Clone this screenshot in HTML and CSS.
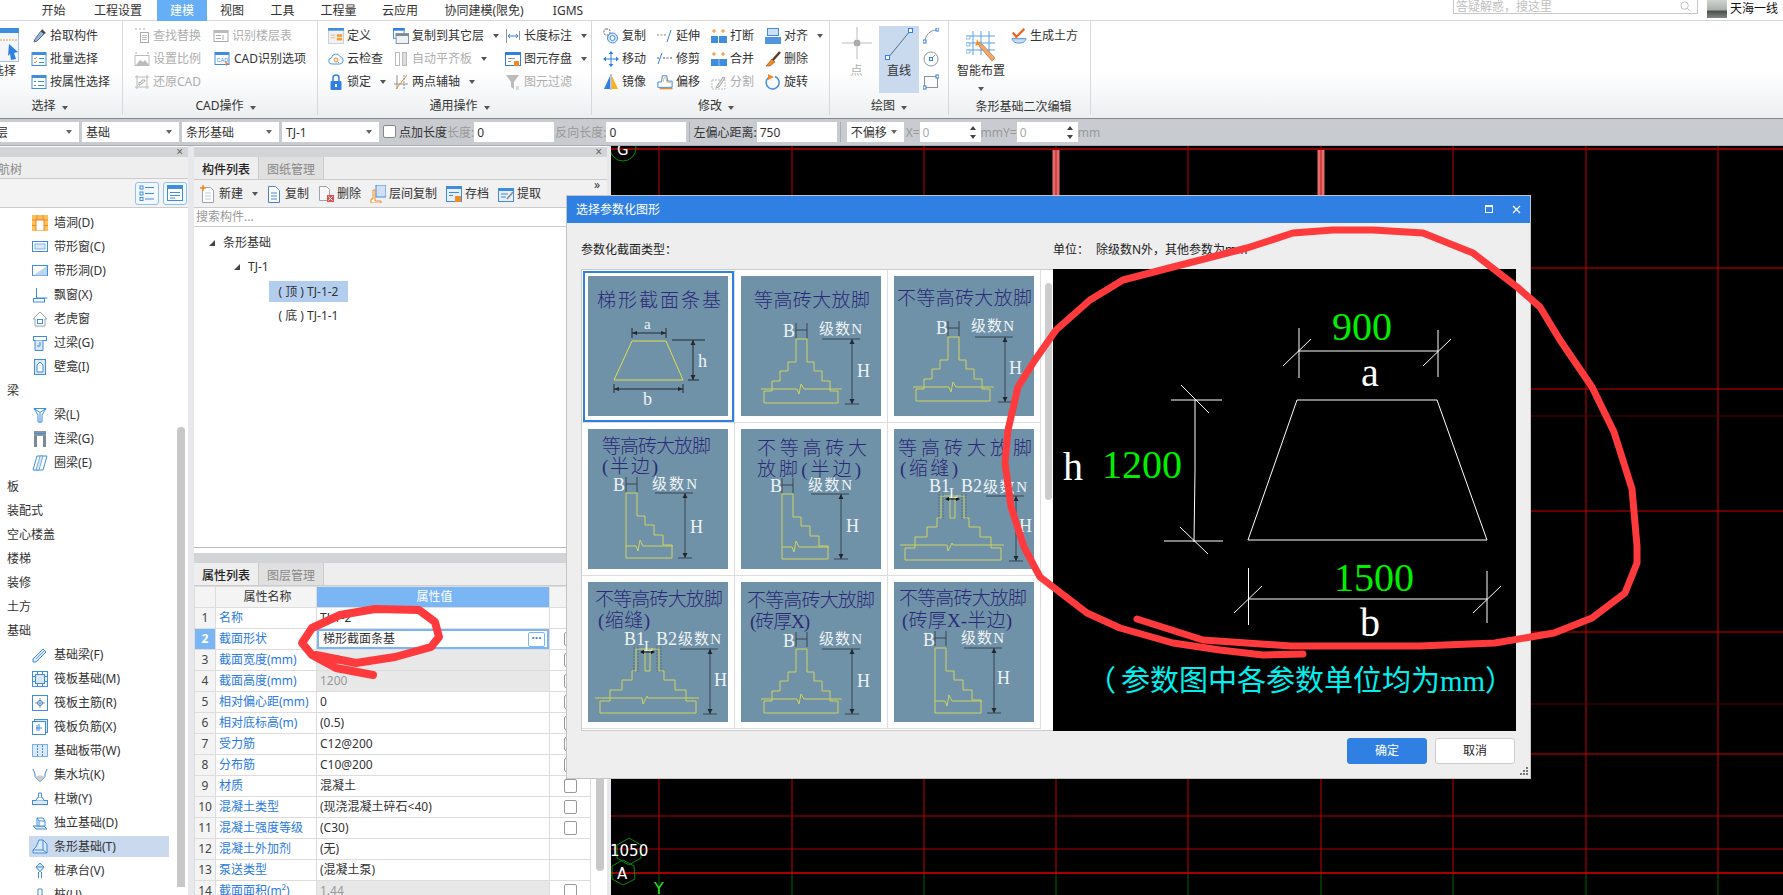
FILE: index.html
```html
<html>
<head>
<meta charset="utf-8">
<title>选择参数化图形</title>
<link rel="stylesheet" href="styles.css">
</head>
<body>
<svg class="defs">
  <defs>
    <symbol id="i-pick" viewBox="0 0 16 16"><path d="M10 3l3 3-7 7-3 1 1-3z" fill="#8db8e4" stroke="#5d6b78"/><path d="M11 1l4 4-2 1-3-3z" fill="#444"/></symbol>
    <symbol id="i-batch" viewBox="0 0 16 16"><rect x="1" y="1.500" width="14" height="13" fill="#fff" stroke="#3f8ddf"/><rect x="1" y="1" width="14" height="3" fill="#3f8ddf"/><path d="M3 7l1 1 2-2M3 11l1 1 2-2" fill="none" stroke="#f08a24"/><path d="M8 7.500h5M8 11.500h5" stroke="#3f8ddf"/></symbol>
    <symbol id="i-attr" viewBox="0 0 16 16"><rect x="1" y="1.500" width="14" height="13" fill="#fff" stroke="#3f8ddf"/><rect x="1" y="1" width="14" height="3" fill="#3f8ddf"/><path d="M3 7.500h2M7 7.500h6M3 11.500h2M7 11.500h6" stroke="#3f8ddf"/></symbol>
    <symbol id="i-find" viewBox="0 0 16 16"><path d="M1 1h2M5 1h2M9 1h2" stroke="#aaa"/><rect x="6.500" y="4.500" width="8" height="10" fill="#fff" stroke="#aaa"/><path d="M8 7.500h5M8 9.500h5M8 11.500h5" stroke="#bbb"/></symbol>
    <symbol id="i-floor" viewBox="0 0 16 16"><rect x="1" y="2.500" width="14" height="11" fill="#fff" stroke="#aaa"/><rect x="1" y="2" width="14" height="3" fill="#bbb"/><path d="M3 7.500h5M3 10.500h5M10 7v5" stroke="#aaa"/></symbol>
    <symbol id="i-scale" viewBox="0 0 16 16"><path d="M1 2h2M13 2h2" stroke="#aaa"/><rect x="1" y="4.500" width="14" height="10" fill="#fff" stroke="#bbb"/><path d="M2 14l4-5 3 2 2-2 4 5z" fill="#bbb"/></symbol>
    <symbol id="i-cad" viewBox="0 0 16 16"><rect x="1" y="1.500" width="14" height="12" fill="#fff" stroke="#3f8ddf"/><rect x="1" y="1" width="14" height="3" fill="#3f8ddf"/><text class="ico-text" x="2.500" y="11">CAD</text><path d="M11 10l4 3-2 .6-.7 2z" fill="#f07b3f"/></symbol>
    <symbol id="i-undo" viewBox="0 0 16 16"><path d="M3 1v14M1 3h14M13 1v14M1 13h14" stroke="#bbb" fill="none"/><path d="M6 11l5-4v-1h-3l-2 3-1-1v3z" fill="none" stroke="#aaa"/></symbol>
    <symbol id="i-def" viewBox="0 0 18 18"><rect x=".5" y=".5" width="17" height="17" fill="#eef2f6" stroke="#c6ccd2"/><rect y="0" width="18" height="3" fill="#3f8ddf"/><path d="M3 8h5M3 11h5" stroke="#f0b060"/><rect x="10" y="7" width="6" height="3" fill="#f0a030"/><rect x="10" y="11" width="6" height="3" fill="#f0a030"/></symbol>
    <symbol id="i-cloud" viewBox="0 0 16 16"><path d="M4 13a3 3 0 0 1-.5-6A4.500 4.500 0 0 1 12 5.500 3.800 3.800 0 0 1 12 13z" fill="#fff" stroke="#4a96e2"/><circle cx="8" cy="9" r="2" fill="none" stroke="#f08a24"/><path d="M9.500 10.500l1.500 1.500" stroke="#f08a24"/></symbol>
    <symbol id="i-lock" viewBox="0 0 16 16"><path d="M5 7V4a3 3 0 0 1 6 0v3" fill="none" stroke="#2f80e2" stroke-width="1.500"/><rect x="2.500" y="7" width="11" height="9" rx="1" fill="#2f80e2"/><rect x="7" y="10" width="2" height="3" fill="#fff"/></symbol>
    <symbol id="i-copyfloor" viewBox="0 0 18 18"><rect x=".5" y=".5" width="12" height="11" fill="#fff" stroke="#2f80e2"/><rect width="13" height="3" fill="#2f80e2"/><rect x="3.500" y="6.500" width="14" height="11" fill="#eef2f6" stroke="#7c8a96"/><rect x="3" y="6" width="15" height="3" fill="#7c8a96"/></symbol>
    <symbol id="i-slab" viewBox="0 0 16 16"><rect x="2.500" y="1.500" width="4" height="13" fill="#fff" stroke="#bbb"/><rect x="9.500" y="1.500" width="4" height="13" fill="#ddd" stroke="#bbb"/></symbol>
    <symbol id="i-axis" viewBox="0 0 16 16"><path d="M4 1v14M1 10h14" stroke="#8a949c"/><path d="M14 1L3 15" stroke="#f08a24"/><path d="M11 1v14" stroke="#8a949c" stroke-dasharray="2 1"/></symbol>
    <symbol id="i-len" viewBox="0 0 16 16"><path d="M1.500 1v14M14.500 3v9" stroke="#8a949c"/><path d="M3 8h10M5 6L3 8l2 2M11 6l2 2-2 2" fill="none" stroke="#2f80e2"/></symbol>
    <symbol id="i-save" viewBox="0 0 16 16"><rect x=".5" y="1.500" width="15" height="13" fill="#fff" stroke="#2f80e2"/><rect y="1" width="16" height="3" fill="#2f80e2"/><path d="M3 7.500h7M3 10.500h3" stroke="#8a949c"/><rect x="9" y="10" width="5" height="5" fill="#f08a24"/></symbol>
    <symbol id="i-filter" viewBox="0 0 16 16"><path d="M1 1h13L9 8v7l-3-2V8z" fill="#bcbcbc"/><path d="M11 13h3M11 15h3" stroke="#bbb"/></symbol>
    <symbol id="i-copy" viewBox="0 0 16 16"><rect x="1" y="1" width="6" height="6" rx="2" fill="none" stroke="#666" stroke-dasharray="2 1"/><circle cx="9.500" cy="10" r="5" fill="#d8e8f8" stroke="#3f8ddf"/><circle cx="9.500" cy="10" r="2.500" fill="#fff" stroke="#3f8ddf"/></symbol>
    <symbol id="i-extend" viewBox="0 0 16 16"><path d="M0 7h10" stroke="#888" stroke-dasharray="2 1.500"/><path d="M10 14l4-12" stroke="#2f80e2"/></symbol>
    <symbol id="i-trim" viewBox="0 0 16 16"><path d="M1 13l4-11" stroke="#2f80e2"/><path d="M0 7h3M6 7h9" stroke="#555" stroke-dasharray="2 1.500"/></symbol>
    <symbol id="i-move" viewBox="0 0 16 16"><path d="M8 2v12M2 8h12" stroke="#2f80e2"/><path d="M8 0l2.500 3h-5zM8 16l2.500-3h-5zM0 8l3-2.500v5zM16 8l-3-2.500v5z" fill="#2f80e2"/></symbol>
    <symbol id="i-mirror" viewBox="0 0 16 16"><path d="M7 2v13H1z" fill="#2f80e2"/><path d="M9 2v13h6z" fill="#fbb020"/><path d="M8 0v16" stroke="#888"/></symbol>
    <symbol id="i-offset" viewBox="0 0 18 18"><path d="M1 15V9h4l1-7h5l1 6h5v7z" fill="#fff" stroke="#2f80e2"/><path d="M3 16.500h14.500" stroke="#f08a24" stroke-width="1.500"/><path d="M7 9l1-5h2l1 5 5 1" fill="none" stroke="#f0b060"/></symbol>
    <symbol id="i-break" viewBox="0 0 16 16"><path d="M3 1v4M1 3h4M12 1v4M10 3h4" stroke="#f08a24"/><rect x="0" y="8" width="7" height="7" fill="#3f8ddf"/><rect x="8" y="8" width="8" height="7" fill="#3f8ddf"/></symbol>
    <symbol id="i-merge" viewBox="0 0 16 16"><path d="M3 1v4M1 3h4M12 1v4M10 3h4" stroke="#f08a24"/><rect x="0" y="8" width="16" height="7" fill="#3f8ddf"/><path d="M8 8v7" stroke="#9cc4ee"/></symbol>
    <symbol id="i-split" viewBox="0 0 16 16"><rect x="1" y="6" width="13" height="9" fill="#fff" stroke="#bbb" stroke-dasharray="2 1"/><path d="M6 12l6-9 2 1-6 9-3 1z" fill="#ddd" stroke="#aaa"/></symbol>
    <symbol id="i-alignb" viewBox="0 0 16 16"><rect x="2.500" y=".5" width="11" height="7" fill="#cfe0f5" stroke="#3f8ddf"/><rect y="9" width="16" height="7" fill="#4f95e0"/></symbol>
    <symbol id="i-del" viewBox="0 0 16 16"><path d="M15 1L7 10" stroke="#5a3a20" stroke-width="2.500"/><path d="M7 8l3 3-5 4H1z" fill="#f08a24" stroke="#5a3a20" stroke-width=".5"/></symbol>
    <symbol id="i-rotate" viewBox="0 0 16 16"><path d="M10 2.500A6.500 6.500 0 1 1 3 4" fill="none" stroke="#3f8ddf" stroke-width="1.500"/><path d="M3 0l6 3-6 3z" fill="#f08a24"/></symbol>
    <symbol id="i-point" viewBox="0 0 30 32"><path d="M15 0v12M15 20v12M0 16h11M19 16h11" stroke="#bbb"/><circle cx="15" cy="16" r="3.500" fill="#aaa"/></symbol>
    <symbol id="i-line" viewBox="0 0 28 34"><path d="M3 31L25 4" stroke="#56708c"/><rect x=".5" y="28.500" width="4" height="4" fill="#fff" stroke="#2f80e2"/><rect x="23.500" y="1.500" width="4" height="4" fill="#fff" stroke="#2f80e2"/></symbol>
    <symbol id="i-arc" viewBox="0 0 16 16"><path d="M2 14C2 7 7 2 14 2" fill="none" stroke="#8a949c"/><rect x="0" y="12" width="3" height="3" fill="#fff" stroke="#2f80e2"/><rect x="13" y="0" width="3" height="3" fill="#fff" stroke="#2f80e2"/></symbol>
    <symbol id="i-circle" viewBox="0 0 16 16"><circle cx="8" cy="8" r="7" fill="none" stroke="#8a949c"/><path d="M8 8l4-4" stroke="#8a949c"/><rect x="6.500" y="6.500" width="3" height="3" fill="#fff" stroke="#2f80e2"/></symbol>
    <symbol id="i-rect" viewBox="0 0 16 16"><rect x="1.500" y="2.500" width="13" height="11" fill="none" stroke="#8a949c"/><rect x="0" y="12" width="3" height="3" fill="#fff" stroke="#2f80e2"/><rect x="13" y="1" width="3" height="3" fill="#fff" stroke="#2f80e2"/></symbol>
    <symbol id="i-smart" viewBox="0 0 30 34"><path d="M7 2v24M15 2v24M23 2v24M1 7h28M1 14h28M1 21h28" stroke="#5aa0e8"/><path d="M0 7h4v3H0zM0 14h4v3H0zM0 21h4v3H0z" fill="#fff" stroke="#5aa0e8" stroke-width=".7"/><path d="M13 17l3 -2 13 14-3 3z" fill="#f0a868" stroke="#a8683c" stroke-width=".6"/><path d="M11 10l1.500 3 3-.5-2 2.500 1 3-2.500-2-3 1 1.500-3z" fill="#f08a24"/></symbol>
    <symbol id="i-earth" viewBox="0 0 18 18"><path d="M2 5l4 5 9-9" fill="none" stroke="#f0641e" stroke-width="2.500"/><path d="M1 12h16c-1 3-3 5-8 5s-7-2-8-5z" fill="#c9dcf0" stroke="#3f8ddf"/></symbol>
    <symbol id="i-new" viewBox="0 0 16 18"><path d="M2.500 2.500h8l3 3v12h-11z" fill="#fff" stroke="#98a4ae"/><path d="M5 8h6M5 11h6M5 14h6" stroke="#c0c8d0"/><path d="M3 0v6M0 3h6" stroke="#f08a24" stroke-width="1.500"/></symbol>
    <symbol id="i-doc" viewBox="0 0 14 18"><path d="M1.500 1.500h7l4 4v12h-11z" fill="#fff" stroke="#4a86c8"/><path d="M4 8h6M4 11h6M4 14h6" stroke="#4a86c8"/></symbol>
    <symbol id="i-docdel" viewBox="0 0 16 18"><path d="M1.500 1.500h7l3 3v11h-10z" fill="#f8f8f8" stroke="#98a4ae"/><rect x="9" y="10" width="7" height="7" fill="#e05050"/><path d="M10.500 11.500l4 4M14.500 11.500l-4 4" stroke="#fff"/></symbol>
    <symbol id="i-flcopy" viewBox="0 0 16 18"><rect x="6" y="0" width="10" height="12" fill="#cfe0f5" stroke="#3f8ddf"/><path d="M5 5H3v9h-2v4h10v-2H5z" fill="#fff" stroke="#f08a24"/></symbol>
    <symbol id="i-archive" viewBox="0 0 16 18"><rect x=".5" y="1.500" width="15" height="15" fill="#e8eff7" stroke="#3f8ddf"/><rect y="1" width="16" height="3" fill="#3f8ddf"/><path d="M3 7.500h10M3 10.500h4" stroke="#3f8ddf"/><rect x="9" y="11" width="6" height="6" fill="#f08a24"/></symbol>
    <symbol id="i-extract" viewBox="0 0 16 18"><rect x=".5" y="3.500" width="15" height="13" fill="#e8eff7" stroke="#3f8ddf"/><rect y="3" width="16" height="3" fill="#3f8ddf"/><path d="M3 9h7M3 12h5" stroke="#3f8ddf"/><path d="M9 14l6-7" stroke="#888" stroke-width="1.500"/></symbol>
    <symbol id="n-wall" viewBox="0 0 16 16"><rect width="16" height="16" fill="#fbc25c"/><path d="M0 5h16M5 0v5M11 0v5M0 10.500h4M12 10.500h4" stroke="#f08a24"/><rect x="4" y="5" width="8" height="11" fill="#fff" stroke="#f08a24"/></symbol>
    <symbol id="n-bandwin" viewBox="0 0 16 16"><rect x=".5" y="2.500" width="15" height="10" fill="#fff" stroke="#3f8ddf"/><rect x="3" y="5" width="10" height="5" fill="#dbe8f7" stroke="#3f8ddf" stroke-width=".6"/></symbol>
    <symbol id="n-bandhole" viewBox="0 0 16 16"><rect x=".5" y="2.500" width="15" height="10" fill="#fff" stroke="#3f8ddf"/><path d="M1 12.500L15 3v9.500z" fill="#bcd5f0"/></symbol>
    <symbol id="n-bay" viewBox="0 0 16 16"><path d="M4.500 1v10h11" fill="none" stroke="#3f8ddf"/><rect x="1.500" y="11.500" width="11" height="3.500" fill="#fff" stroke="#3f8ddf"/></symbol>
    <symbol id="n-dormer" viewBox="0 0 16 16"><path d="M8 1L1 8h2v7h10V8h2z" fill="#fff" stroke="#98a4ae"/><rect x="5.500" y="8.500" width="5" height="4" fill="#fff" stroke="#3f8ddf"/></symbol>
    <symbol id="n-lintel" viewBox="0 0 16 16"><rect x="1.500" y="1.500" width="13" height="4" fill="#fff" stroke="#3f8ddf"/><path d="M3 5.500v10h8V5.500" fill="#dbe8f7" stroke="#3f8ddf"/><path d="M5 11h3V7" fill="none" stroke="#3f8ddf"/></symbol>
    <symbol id="n-niche" viewBox="0 0 16 16"><rect x="2.500" y=".5" width="11" height="15" fill="#dbe8f7" stroke="#3f8ddf"/><path d="M5 13V6l3-3 3 3v7z" fill="#fff" stroke="#3f8ddf"/></symbol>
    <symbol id="n-beam" viewBox="0 0 16 16"><path d="M2 1.500h12L10 8v7H6V8z" fill="#fff" stroke="#3f8ddf"/><path d="M2 1.500l6 4 6-4M8 5.500V15" fill="none" stroke="#3f8ddf"/></symbol>
    <symbol id="n-linkbeam" viewBox="0 0 16 16"><rect x="2" y="0" width="12" height="5" fill="#8a949c"/><path d="M3.500 5v11M12.500 5v11" stroke="#7c8a96" stroke-width="3"/><path d="M2 2.500h12" stroke="#3f8ddf"/></symbol>
    <symbol id="n-ring" viewBox="0 0 16 16"><path d="M5 1h10l-4 14H1z" fill="#fff" stroke="#3f8ddf"/><path d="M8 1h3l-4 14H4z" fill="#dbe8f7" stroke="#3f8ddf" stroke-width=".7"/></symbol>
    <symbol id="n-fbeam" viewBox="0 0 16 16"><path d="M1 12L11 2l3 3L4 15H1z" fill="#dbe8f7" stroke="#3f8ddf"/><path d="M4 12l8-8" stroke="#3f8ddf" stroke-width=".7"/></symbol>
    <symbol id="n-raft" viewBox="0 0 16 16"><rect x=".5" y=".5" width="15" height="15" fill="#fff" stroke="#3f8ddf"/><rect x="3.500" y="3.500" width="9" height="9" fill="#dbe8f7" stroke="#3f8ddf"/><path d="M0 5.500h3M0 10.500h3M13 5.500h3M13 10.500h3M5.500 0v3M10.500 0v3M5.500 13v3M10.500 13v3" stroke="#3f8ddf"/></symbol>
    <symbol id="n-rafttop" viewBox="0 0 16 16"><rect x=".5" y=".5" width="15" height="15" fill="#fff" stroke="#3f8ddf"/><path d="M8 3v10M3 8h10" stroke="#8a949c"/><circle cx="8" cy="8" r="2.500" fill="none" stroke="#3f8ddf"/></symbol>
    <symbol id="n-raftneg" viewBox="0 0 16 16"><rect x="2.500" y=".5" width="13" height="13" fill="#dbe8f7" stroke="#3f8ddf"/><rect x=".5" y="2.500" width="13" height="13" fill="#fff" stroke="#3f8ddf"/><path d="M4 9h6M7 5v7M5 6v6" stroke="#3f8ddf"/></symbol>
    <symbol id="n-strip" viewBox="0 0 16 16"><rect x=".5" y="1.500" width="15" height="12" fill="#dbe8f7" stroke="#7fb0e8"/><path d="M5.500 2v11M10.500 2v11" stroke="#3f8ddf" stroke-dasharray="2 1"/></symbol>
    <symbol id="n-sump" viewBox="0 0 16 16"><path d="M1 2l2 5v3l5 5 5-5V7l2-5" fill="none" stroke="#3f8ddf"/><path d="M3 10c3-2 7-2 10 0l-5 5z" fill="#c8ccd0"/></symbol>
    <symbol id="n-pier" viewBox="0 0 16 16"><rect x=".5" y="9.500" width="15" height="4" fill="#dbe8f7" stroke="#3f8ddf"/><path d="M4 9.500L6 6h4l2 3.500" fill="#fff" stroke="#3f8ddf"/><path d="M6.500 6V2h3v4" fill="#fff" stroke="#3f8ddf"/></symbol>
    <symbol id="n-iso" viewBox="0 0 16 16"><path d="M1 11h11l3 3H4z" fill="#dbe8f7" stroke="#3f8ddf"/><path d="M5 11V3h6l2 3v5z" fill="#fff" stroke="#3f8ddf"/><path d="M5 3l2 3h6M7 6v5" fill="none" stroke="#3f8ddf"/></symbol>
    <symbol id="n-band" viewBox="0 0 16 16"><path d="M1 11l3-3 3-7 4 0 4 4v9H1z" fill="#dbe8f7" stroke="#3f8ddf"/><path d="M1 11h10l4 3M11 1v10" fill="none" stroke="#3f8ddf"/></symbol>
    <symbol id="n-cap" viewBox="0 0 16 16"><path d="M8 0l4 4-4 5-4-5z" fill="#dbe8f7" stroke="#3f8ddf"/><path d="M4 4h8M6.500 9v6M9.500 9v6" stroke="#3f8ddf"/></symbol>
    <symbol id="n-pile" viewBox="0 0 16 16"><path d="M6 2h4v8l4 3H2l4-3z" fill="#fff" stroke="#3f8ddf"/></symbol>
    <symbol id="b-list" viewBox="0 0 16 16"><rect x="1" y="1" width="3" height="3" fill="none" stroke="#3f8ddf"/><rect x="1" y="7" width="3" height="3" fill="none" stroke="#3f8ddf"/><rect x="1" y="12.500" width="3" height="3" fill="none" stroke="#3f8ddf"/><path d="M6 2.500h9M6 8.500h9M6 14h9" stroke="#3f8ddf"/></symbol>
    <symbol id="b-form" viewBox="0 0 16 16"><rect x=".5" y=".5" width="15" height="15" fill="#fff" stroke="#3f8ddf"/><rect width="16" height="4" fill="#3f8ddf"/><path d="M3 7.500h10M3 10.500h10M3 13h5" stroke="#3f8ddf"/></symbol>
    <g id="step-full" fill="none" stroke="#cdd25e">
      <path d="M55 63h11v23h7v9h8v10h8v10h8v12H23v-12h8v-10h8v-10h8v-9h8z"/>
      <path d="M20 113h36l2 5 2-10 3 5h38"/>
    </g>
    <g id="step-half" fill="none" stroke="#cdd25e">
      <path d="M38 64h11v23h8v9h9v10h9v10h9v13H38z"/>
      <path d="M38 117h10l2 5 2-11 3 6h30"/>
    </g>
    <g id="step-slit" fill="none" stroke="#cdd25e">
      <path d="M47 67h23v22h5v9h11v10h11v11h10v12H11v-12h10v-11h12v-10h10v-9h4z"/>
      <path d="M56 67v22h5V67"/>
      <path d="M6 116h47l1 6 4-8 1 2h51"/>
      <path d="M45 62v28M49 62v28M68 62v28M72 62v28" stroke="#55707f" stroke-dasharray="2 1"/>
      <path d="M53 70h11" stroke="#111"/>
      <path d="M51 70l4-2v4zM66 70l-4-2v4z" fill="#111" stroke="none"/>
    </g>
    <g id="dim-h">
      <path d="M-30 0H8M0 0v65M-7 65H7" fill="none" stroke="#36444e"/>
      <path d="M0 0l-2.500 5h5zM0 65l-2.500-5h5z" fill="#20292f"/>
    </g>
    <g id="b-tick"><path d="M0 0v15M11 0v15M0 7h11" fill="none" stroke="#36444e"/></g>
  </defs>
</svg>

<div class="menubar">
  <span class="tab w-51">开始</span>
  <span class="tab w-78">工程设置</span>
  <span class="tab active w-50">建模</span>
  <span class="tab w-50">视图</span>
  <span class="tab w-51">工具</span>
  <span class="tab w-61">工程量</span>
  <span class="tab w-62">云应用</span>
  <span class="tab w-106">协同建模(限免)</span>
  <span class="tab w-62">IGMS</span>
  <div class="menu-right">
    <div class="search-box"><span>答疑解惑，搜这里</span><svg class="search-ico" viewBox="0 0 12 12"><circle cx="5" cy="5" r="4" fill="none" stroke="#bbb"/><path d="M8 8l3 3" stroke="#bbb"/></svg></div>
    <div class="avatar"></div>
    <span class="user">天海一线</span>
  </div>
</div>

<div class="ribbon">
  <div class="group g-select">
    <div class="tools">
      <div class="big-cut">
        <svg class="ico-select" viewBox="0 0 30 34"><rect x=".5" y=".5" width="29" height="33" fill="#f3f7fc" stroke="#a8c4e4"/><rect width="30" height="5" fill="#3f8ddf"/><path d="M2 12h26" stroke="#f0a030" stroke-dasharray="2 1"/><path d="M20 16l9 8-4 1 2 6-5 1-1-6-2 2z" fill="#2f80e2"/></svg>
        <span>选择</span>
      </div>
      <div class="col">
        <div class="tool"><svg class="ico"><use href="#i-pick"/></svg>拾取构件</div>
        <div class="tool"><svg class="ico"><use href="#i-batch"/></svg>批量选择</div>
        <div class="tool"><svg class="ico"><use href="#i-attr"/></svg>按属性选择</div>
      </div>
    </div>
    <div class="group-name">选择<i class="caret"></i></div>
  </div>

  <div class="group g-cad">
    <div class="tools">
      <div class="col w-79">
        <div class="tool off"><svg class="ico"><use href="#i-find"/></svg>查找替换</div>
        <div class="tool off"><svg class="ico"><use href="#i-scale"/></svg>设置比例</div>
        <div class="tool off"><svg class="ico"><use href="#i-undo"/></svg>还原CAD</div>
      </div>
      <div class="col">
        <div class="tool off"><svg class="ico"><use href="#i-floor"/></svg>识别楼层表</div>
        <div class="tool"><svg class="ico ico-wide"><use href="#i-cad"/></svg>CAD识别选项</div>
      </div>
    </div>
    <div class="group-name">CAD操作<i class="caret"></i></div>
  </div>

  <div class="group g-common">
    <div class="tools">
      <div class="col w-65">
        <div class="tool"><svg class="ico"><use href="#i-def"/></svg>定义</div>
        <div class="tool"><svg class="ico"><use href="#i-cloud"/></svg>云检查</div>
        <div class="tool"><svg class="ico"><use href="#i-lock"/></svg>锁定<i class="caret"></i></div>
      </div>
      <div class="col w-112">
        <div class="tool"><svg class="ico"><use href="#i-copyfloor"/></svg>复制到其它层<i class="caret"></i></div>
        <div class="tool off"><svg class="ico"><use href="#i-slab"/></svg>自动平齐板<i class="caret"></i></div>
        <div class="tool"><svg class="ico"><use href="#i-axis"/></svg>两点辅轴<i class="caret"></i></div>
      </div>
      <div class="col">
        <div class="tool"><svg class="ico"><use href="#i-len"/></svg>长度标注<i class="caret"></i></div>
        <div class="tool"><svg class="ico"><use href="#i-save"/></svg>图元存盘<i class="caret"></i></div>
        <div class="tool off"><svg class="ico"><use href="#i-filter"/></svg>图元过滤</div>
      </div>
    </div>
    <div class="group-name">通用操作<i class="caret"></i></div>
  </div>

  <div class="group g-modify">
    <div class="tools">
      <div class="col w-54">
        <div class="tool"><svg class="ico"><use href="#i-copy"/></svg>复制</div>
        <div class="tool"><svg class="ico"><use href="#i-move"/></svg>移动</div>
        <div class="tool"><svg class="ico"><use href="#i-mirror"/></svg>镜像</div>
      </div>
      <div class="col w-54">
        <div class="tool"><svg class="ico"><use href="#i-extend"/></svg>延伸</div>
        <div class="tool"><svg class="ico"><use href="#i-trim"/></svg>修剪</div>
        <div class="tool"><svg class="ico"><use href="#i-offset"/></svg>偏移</div>
      </div>
      <div class="col w-54">
        <div class="tool"><svg class="ico"><use href="#i-break"/></svg>打断</div>
        <div class="tool"><svg class="ico"><use href="#i-merge"/></svg>合并</div>
        <div class="tool off"><svg class="ico"><use href="#i-split"/></svg>分割</div>
      </div>
      <div class="col">
        <div class="tool"><svg class="ico"><use href="#i-alignb"/></svg>对齐<i class="caret"></i></div>
        <div class="tool"><svg class="ico"><use href="#i-del"/></svg>删除</div>
        <div class="tool"><svg class="ico"><use href="#i-rotate"/></svg>旋转</div>
      </div>
    </div>
    <div class="group-name">修改<i class="caret"></i></div>
  </div>

  <div class="group g-draw">
    <div class="tools">
      <div class="bigbtn w-49 off"><svg class="ico-point"><use href="#i-point"/></svg><span>点</span></div>
      <div class="bigbtn w-40 pressed"><svg class="ico-line"><use href="#i-line"/></svg><span>直线</span></div>
      <div class="col small">
        <div class="tool"><svg class="ico"><use href="#i-arc"/></svg></div>
        <div class="tool"><svg class="ico"><use href="#i-circle"/></svg></div>
        <div class="tool"><svg class="ico"><use href="#i-rect"/></svg></div>
      </div>
    </div>
    <div class="group-name">绘图<i class="caret"></i></div>
  </div>

  <div class="group g-smart">
    <div class="tools">
      <div class="bigbtn w-48"><svg class="ico-smart"><use href="#i-smart"/></svg><span>智能布置</span><i class="caret"></i></div>
      <div class="col">
        <div class="tool"><svg class="ico"><use href="#i-earth"/></svg>生成土方</div>
      </div>
    </div>
    <div class="group-name">条形基础二次编辑</div>
  </div>
</div>

<div class="optbar">
  <div class="combo first">层</div>
  <div class="combo w-97">基础</div>
  <div class="combo w-97">条形基础</div>
  <div class="combo w-97">TJ-1</div>
  <div class="check"></div>
  <span class="lbl">点加长度</span><span class="lbl dim">长度:</span>
  <div class="field w-80">0</div>
  <span class="lbl dim rev">反向长度:</span>
  <div class="field w-80">0</div>
  <i class="sep"></i>
  <span class="lbl">左偏心距离:</span>
  <div class="field w-80">750</div>
  <i class="sep"></i>
  <div class="combo w-57">不偏移</div>
  <span class="lbl dim x-lbl">X=</span>
  <div class="field spin w-61 dimtext">0</div>
  <span class="lbl dim">mmY=</span>
  <div class="field spin w-61 dimtext">0</div>
  <span class="lbl dim">mm</span>
</div>

<div class="main">
  <div class="leftpanel">
    <div class="band"><span class="band-x">×</span></div>
    <div class="nav-title">航树</div>
    <div class="nav-tools">
      <span class="navbtn"><svg class="ico"><use href="#b-list"/></svg></span>
      <span class="navbtn"><svg class="ico"><use href="#b-form"/></svg></span>
    </div>
    <div class="nav-body">
      <div class="nav-list">
        <div class="item"><div class="row"><svg class="ico"><use href="#n-wall"/></svg>墙洞(D)</div></div>
        <div class="item"><div class="row"><svg class="ico"><use href="#n-bandwin"/></svg>带形窗(C)</div></div>
        <div class="item"><div class="row"><svg class="ico"><use href="#n-bandhole"/></svg>带形洞(D)</div></div>
        <div class="item"><div class="row"><svg class="ico"><use href="#n-bay"/></svg>飘窗(X)</div></div>
        <div class="item"><div class="row"><svg class="ico"><use href="#n-dormer"/></svg>老虎窗</div></div>
        <div class="item"><div class="row"><svg class="ico"><use href="#n-lintel"/></svg>过梁(G)</div></div>
        <div class="item"><div class="row"><svg class="ico"><use href="#n-niche"/></svg>壁龛(I)</div></div>
        <div class="parent">梁</div>
        <div class="item"><div class="row"><svg class="ico"><use href="#n-beam"/></svg>梁(L)</div></div>
        <div class="item"><div class="row"><svg class="ico"><use href="#n-linkbeam"/></svg>连梁(G)</div></div>
        <div class="item"><div class="row"><svg class="ico"><use href="#n-ring"/></svg>圈梁(E)</div></div>
        <div class="parent">板</div>
        <div class="parent">装配式</div>
        <div class="parent">空心楼盖</div>
        <div class="parent">楼梯</div>
        <div class="parent">装修</div>
        <div class="parent">土方</div>
        <div class="parent">基础</div>
        <div class="item"><div class="row"><svg class="ico"><use href="#n-fbeam"/></svg>基础梁(F)</div></div>
        <div class="item"><div class="row"><svg class="ico"><use href="#n-raft"/></svg>筏板基础(M)</div></div>
        <div class="item"><div class="row"><svg class="ico"><use href="#n-rafttop"/></svg>筏板主筋(R)</div></div>
        <div class="item"><div class="row"><svg class="ico"><use href="#n-raftneg"/></svg>筏板负筋(X)</div></div>
        <div class="item"><div class="row"><svg class="ico"><use href="#n-strip"/></svg>基础板带(W)</div></div>
        <div class="item"><div class="row"><svg class="ico"><use href="#n-sump"/></svg>集水坑(K)</div></div>
        <div class="item"><div class="row"><svg class="ico"><use href="#n-pier"/></svg>柱墩(Y)</div></div>
        <div class="item"><div class="row"><svg class="ico"><use href="#n-iso"/></svg>独立基础(D)</div></div>
        <div class="item"><div class="row selected"><svg class="ico"><use href="#n-band"/></svg>条形基础(T)</div></div>
        <div class="item"><div class="row"><svg class="ico"><use href="#n-cap"/></svg>桩承台(V)</div></div>
        <div class="item"><div class="row"><svg class="ico"><use href="#n-pile"/></svg>桩(U)</div></div>
      </div>
      <div class="nav-scroll"><div class="thumb"></div></div>
    </div>
  </div>

  <div class="midpanel">
    <div class="comp-part">
      <div class="band"><span class="band-x">×</span></div>
      <div class="tabs">
        <span class="ptab active">构件列表</span>
        <span class="ptab">图纸管理</span>
      </div>
      <div class="comp-tools">
        <span class="ctool"><svg class="ico ico-tall"><use href="#i-new"/></svg>新建<i class="caret"></i></span>
        <span class="ctool"><svg class="ico ico-tall"><use href="#i-doc"/></svg>复制</span>
        <span class="ctool"><svg class="ico ico-tall"><use href="#i-docdel"/></svg>删除</span>
        <span class="ctool"><svg class="ico ico-tall"><use href="#i-flcopy"/></svg>层间复制</span>
        <span class="ctool"><svg class="ico ico-tall"><use href="#i-archive"/></svg>存档</span>
        <span class="ctool"><svg class="ico ico-tall"><use href="#i-extract"/></svg>提取</span>
        <span class="more">»</span>
      </div>
      <div class="comp-search">搜索构件...</div>
      <div class="tree">
        <div class="node lv0"><i class="tri"></i>条形基础</div>
        <div class="node lv1"><i class="tri"></i>TJ-1</div>
        <div class="node lv2"><span class="on">( 顶 ) TJ-1-2</span></div>
        <div class="node lv2"><span>( 底 ) TJ-1-1</span></div>
      </div>
    </div>

    <div class="prop-part">
      <div class="band"></div>
      <div class="tabs tabs-prop">
        <span class="ptab active">属性列表</span>
        <span class="ptab">图层管理</span>
      </div>
      <div class="prop-body">
        <table class="prop">
          <tr class="head"><th class="c-idx"></th><th class="c-name">属性名称</th><th class="c-val">属性值</th><th class="c-add">附</th></tr>
          <tr><td class="c-idx">1</td><td class="c-name">名称</td><td class="c-val">TJ-1-2</td><td class="c-add"></td></tr>
          <tr class="cur"><td class="c-idx">2</td><td class="c-name">截面形状</td><td class="c-val"><div class="edit">梯形截面条基<span class="dots">···</span></div></td><td class="c-add"><i class="box"></i></td></tr>
          <tr class="ro"><td class="c-idx">3</td><td class="c-name">截面宽度(mm)</td><td class="c-val">900</td><td class="c-add"><i class="box"></i></td></tr>
          <tr class="ro"><td class="c-idx">4</td><td class="c-name">截面高度(mm)</td><td class="c-val">1200</td><td class="c-add"><i class="box"></i></td></tr>
          <tr><td class="c-idx">5</td><td class="c-name">相对偏心距(mm)</td><td class="c-val">0</td><td class="c-add"><i class="box"></i></td></tr>
          <tr><td class="c-idx">6</td><td class="c-name">相对底标高(m)</td><td class="c-val">(0.5)</td><td class="c-add"><i class="box"></i></td></tr>
          <tr><td class="c-idx">7</td><td class="c-name">受力筋</td><td class="c-val">C12@200</td><td class="c-add"><i class="box"></i></td></tr>
          <tr><td class="c-idx">8</td><td class="c-name">分布筋</td><td class="c-val">C10@200</td><td class="c-add"><i class="box"></i></td></tr>
          <tr><td class="c-idx">9</td><td class="c-name">材质</td><td class="c-val">混凝土</td><td class="c-add"><i class="box"></i></td></tr>
          <tr><td class="c-idx">10</td><td class="c-name">混凝土类型</td><td class="c-val">(现浇混凝土碎石&lt;40)</td><td class="c-add"><i class="box"></i></td></tr>
          <tr><td class="c-idx">11</td><td class="c-name">混凝土强度等级</td><td class="c-val">(C30)</td><td class="c-add"><i class="box"></i></td></tr>
          <tr><td class="c-idx">12</td><td class="c-name">混凝土外加剂</td><td class="c-val">(无)</td><td class="c-add"></td></tr>
          <tr><td class="c-idx">13</td><td class="c-name">泵送类型</td><td class="c-val">(混凝土泵)</td><td class="c-add"></td></tr>
          <tr class="ro"><td class="c-idx">14</td><td class="c-name">截面面积(m²)</td><td class="c-val">1.44</td><td class="c-add"><i class="box"></i></td></tr>
        </table>
        <div class="prop-scroll"></div>
      </div>
    </div>
  </div>

  <div class="canvas">
    <svg class="cad" viewBox="611 146 1172 749">
      <g class="cad-v">
        <path d="M659 146V873M792 146V873M924 146V873M1056 146V873M1188 146V873M1321 146V873M1453 146V873M1586 146V873M1718 146V873"/>
      </g>
      <g class="cad-g">
        <path d="M659 873V895M792 873V895M924 873V895M1056 873V895M1188 873V895M1321 873V895M1453 873V895M1586 873V895M1718 873V895"/>
      </g>
      <path class="pink" d="M1056 149V197M1321 149V197"/>
      <path class="pink-in" d="M1056 149V197M1321 149V197"/>
      <g class="cad-h">
        <path d="M611 268H1783M611 389H1783M611 511H1783M611 632H1783M611 754H1783"/>
        <path class="dark" d="M611 416H1783M611 704H1783"/>
        <path class="mid" d="M611 816H1783M611 849H1783"/>
        <path class="top" d="M611 149H1783"/>
        <path class="low" d="M611 873H1783"/>
      </g>
      <circle class="bubble" cx="623" cy="148" r="13"/>
      <text class="cad-text" x="617" y="155">G</text>
      <polygon class="bubble" points="629,838 641,845 641,858 629,865 617,858 617,845"/>
      <polygon class="bubble" points="623,860 634,866 635,879 623,885 612,879 612,866"/>
      <text class="cad-text" x="610" y="856">1050</text>
      <text class="cad-text" x="617" y="879">A</text>
      <text class="cad-y" x="654" y="894">Y</text>
    </svg>
  </div>
</div>

<div class="dialog">
  <div class="dlg-title">
    <span>选择参数化图形</span>
    <i class="dlg-max"></i>
    <svg class="dlg-close" viewBox="0 0 9 9"><path d="M1 1l7 7M8 1L1 8" stroke="#fff" stroke-width="1.300"/></svg>
  </div>
  <div class="dlg-labels">
    <span class="lab-left">参数化截面类型：</span>
    <span class="lab-unit">单位：</span>
    <span>除级数N外，其他参数为mm</span>
  </div>
  <div class="dlg-body">
    <div class="shape-box">
      <div class="shape-grid">
        <div class="cell sel">
          <svg class="thumb-svg" viewBox="0 0 140 140">
            <text class="t-title" x="9" y="31" textLength="124">梯形截面条基</text>
            <path class="yel" d="M44 65h34l17 39H26z"/>
            <path class="blk" d="M44 52v10M78 52v10M44 57h34M84 64h33M105 64v40M100 104h11M26 108v9M95 108v9M26 113h69"/>
            <path class="arw" d="M44 57l5-2v4zM78 57l-5-2v4zM105 64l-2.500 5h5zM105 104l-2.500-5h5zM26 113l5-2v4zM95 113l-5-2v4z"/>
            <text class="t-dim" x="56" y="53">a</text>
            <text class="t-dim big" x="110" y="91">h</text>
            <text class="t-dim big" x="55" y="129">b</text>
          </svg>
        </div>
        <div class="cell">
          <svg class="thumb-svg" viewBox="0 0 140 140">
            <text class="t-title" x="13" y="31" textLength="116">等高砖大放脚</text>
            <use href="#step-full"/><use href="#dim-h" transform="translate(111,63)"/><use href="#b-tick" transform="translate(55,47)"/>
            <text class="t-dim big" x="42" y="61">B</text><text class="t-dim" x="78" y="58" textLength="43">级数N</text><text class="t-dim big" x="116" y="101">H</text>
          </svg>
        </div>
        <div class="cell">
          <svg class="thumb-svg" viewBox="0 0 140 140">
            <text class="t-title" x="3" y="29" textLength="135">不等高砖大放脚</text>
            <use href="#step-full" transform="translate(-1,-2)"/><use href="#dim-h" transform="translate(111,61)"/><use href="#b-tick" transform="translate(54,45)"/>
            <text class="t-dim big" x="42" y="58">B</text><text class="t-dim" x="77" y="55" textLength="43">级数N</text><text class="t-dim big" x="115" y="98">H</text>
          </svg>
        </div>
        <div class="cell">
          <svg class="thumb-svg" viewBox="0 0 140 140">
            <text class="t-title" x="14" y="24" textLength="109">等高砖大放脚</text>
            <text class="t-title" x="14" y="44" textLength="56">(半边)</text>
            <use href="#step-half"/><use href="#dim-h" transform="translate(97,64)"/><use href="#b-tick" transform="translate(38,48)"/>
            <text class="t-dim big" x="25" y="62">B</text><text class="t-dim" x="64" y="60" textLength="45">级数N</text><text class="t-dim big" x="102" y="104">H</text>
          </svg>
        </div>
        <div class="cell">
          <svg class="thumb-svg" viewBox="0 0 140 140">
            <text class="t-title" x="16" y="26" textLength="110">不等高砖大</text>
            <text class="t-title" x="16" y="47" textLength="104">放脚(半边)</text>
            <use href="#step-half" transform="translate(3,1)"/><use href="#dim-h" transform="translate(100,65)"/><use href="#b-tick" transform="translate(41,49)"/>
            <text class="t-dim big" x="29" y="63">B</text><text class="t-dim" x="67" y="61" textLength="44">级数N</text><text class="t-dim big" x="105" y="103">H</text>
          </svg>
        </div>
        <div class="cell">
          <svg class="thumb-svg" viewBox="0 0 140 140">
            <text class="t-title" x="4" y="26" textLength="134">等高砖大放脚</text>
            <text class="t-title" x="6" y="46" textLength="58">(缩缝)</text>
            <use href="#step-slit"/><use href="#dim-h" transform="translate(122,67)"/>
            <text class="t-dim big" x="35" y="63">B1</text><text class="t-dim big" x="67" y="63">B2</text><text class="t-dim" x="89" y="63" textLength="44">级数N</text><text class="t-dim" x="55" y="69">L</text><text class="t-dim big" x="125" y="103">H</text>
          </svg>
        </div>
        <div class="cell">
          <svg class="thumb-svg" viewBox="0 0 140 140">
            <text class="t-title" x="7" y="24" textLength="128">不等高砖大放脚</text>
            <text class="t-title" x="10" y="45" textLength="52">(缩缝)</text>
            <use href="#step-slit" transform="translate(1,0)"/><use href="#dim-h" transform="translate(122,67)"/>
            <text class="t-dim big" x="36" y="63">B1</text><text class="t-dim big" x="68" y="63">B2</text><text class="t-dim" x="90" y="62" textLength="43">级数N</text><text class="t-dim" x="56" y="69">L</text><text class="t-dim big" x="126" y="104">H</text>
          </svg>
        </div>
        <div class="cell">
          <svg class="thumb-svg" viewBox="0 0 140 140">
            <text class="t-title" x="6" y="25" textLength="128">不等高砖大放脚</text>
            <text class="t-title" x="9" y="46" textLength="60">(砖厚X)</text>
            <use href="#step-full" transform="translate(0,4)"/><use href="#dim-h" transform="translate(111,67)"/><use href="#b-tick" transform="translate(55,50)"/>
            <text class="t-dim big" x="42" y="65">B</text><text class="t-dim" x="78" y="62" textLength="43">级数N</text><text class="t-dim big" x="116" y="105">H</text>
          </svg>
        </div>
        <div class="cell">
          <svg class="thumb-svg" viewBox="0 0 140 140">
            <text class="t-title" x="5" y="23" textLength="128">不等高砖大放脚</text>
            <text class="t-title" x="8" y="45" textLength="110">(砖厚X-半边)</text>
            <use href="#step-half" transform="translate(3,2)"/><use href="#dim-h" transform="translate(100,66)"/><use href="#b-tick" transform="translate(41,49)"/>
            <text class="t-dim big" x="29" y="64">B</text><text class="t-dim" x="67" y="61" textLength="43">级数N</text><text class="t-dim big" x="103" y="102">H</text>
          </svg>
        </div>
      </div>
      <div class="shape-scroll"><div class="shape-thumb"></div></div>
    </div>
    <svg class="preview" viewBox="1053 269 463 462">
      <g class="pv-line">
        <path d="M1297 400H1437L1487 540H1248Z"/>
        <path d="M1298 351H1438M1299 328V378M1438 330V377M1283 366L1311 339M1423 366L1451 339"/>
        <path d="M1195 400V470L1194 542M1171 400H1222M1164 541H1223M1181 385L1209 413M1180 527L1208 554"/>
        <path d="M1248 599H1487M1248.500 568V625M1487 571V623M1234 613L1262 586M1473 613L1501 586"/>
      </g>
      <text class="pv-num" x="1332" y="340">900</text>
      <text class="pv-sym" x="1361" y="386">a</text>
      <text class="pv-sym" x="1063" y="480">h</text>
      <text class="pv-num" x="1102" y="478">1200</text>
      <text class="pv-num" x="1334" y="591">1500</text>
      <text class="pv-sym" x="1360" y="636">b</text>
      <text class="pv-note" x="1087" y="691">（<tspan x="1121">参数图中各参数单位均为mm）</tspan></text>
    </svg>
  </div>
  <div class="dlg-foot">
    <span class="btn ok">确定</span>
    <span class="btn">取消</span>
  </div>
  <svg class="grip" viewBox="0 0 8 8"><path d="M6 0h2v2H6zM3 3h2v2H3zM6 3h2v2H6zM0 6h2v2H0zM3 6h2v2H3zM6 6h2v2H6z" fill="#777"/></svg>
</div>

<svg class="ink" viewBox="0 0 1783 895">
  <path d="M1303 654L1263 655L1220 650L1173 643L1120 628L1087 613L1040 577L1024 547L1011 507L1005 463L1008 430L1018 387L1035 360L1056 330L1090 300L1123 280L1173 267L1247 248L1293 233L1333 230L1373 230L1423 233L1473 253L1517 287L1540 307L1560 340L1592 387L1614 432L1632 489L1637 546L1637 563L1625 593L1592 618L1554 633L1495 643L1419 646L1291 646L1203 640L1137 619"/>
  <path class="fat" d="M373 675L336 668L312 655L302 643L312 628L340 615L375 609L419 610L435 622L439 637L431 647L395 657L356 663L316 655"/>
</svg>
</body>
</html>
```

FILE: styles.css
```css
html,body{
    margin: 0;
    padding: 0;
}
body{
    width: 1783px;
    height: 895px;
    overflow: hidden;
    position: relative;
    display: flex;
    flex-direction: column;
    background-color: #e6e8eb;
    color: #333;
    font-family: "Noto Sans", "Noto Sans CJK SC", sans-serif;
    font-size: 12px;
    line-height: 16px;
}
.defs{
    position: absolute;
    width: 0;
    height: 0;
}
.ico{
    width: 16px;
    height: 16px;
    flex: none;
}
.ico-tall{
    height: 18px;
}
.ico-wide{
    width: 18px;
}
.ico-text{
    font-size: 5.5px;
    font-family: "Liberation Sans", sans-serif;
    fill: #3f8ddf;
}
.caret{
    display: inline-block;
    width: 0;
    height: 0;
    margin-left: 6px;
    border-left: 3px solid transparent;
    border-right: 3px solid transparent;
    border-top: 4px solid #555;
}

/* top menu */
.menubar{
    height: 20px;
    display: flex;
    flex: none;
    padding-left: 28px;
    background-color: #fff;
    border-bottom: 1px solid #d8d8d8;
}
.tab{
    text-align: center;
    line-height: 21px;
    height: 21px;
}
.tab.active{
    background-color: #66aef5;
    color: #fff;
}
.w-40{width: 40px;}
.w-48{width: 48px;}
.w-49{width: 49px;}
.w-50{width: 50px;}
.w-51{width: 51px;}
.w-54{width: 54px;}
.w-57{width: 57px;}
.w-61{width: 61px;}
.w-62{width: 62px;}
.w-65{width: 65px;}
.w-78{width: 78px;}
.w-79{width: 79px;}
.w-80{width: 80px;}
.w-97{width: 97px;}
.w-106{width: 106px;}
.w-112{width: 112px;}
.menu-right{
    margin-left: auto;
    display: flex;
    align-items: flex-start;
}
.search-box{
    width: 235px;
    height: 13px;
    border: 1px solid #c8c8c8;
    border-top: none;
    display: flex;
    justify-content: space-between;
    align-items: center;
    padding: 0 6px 0 2px;
    margin-right: 9px;
    color: #c0c0c0;
    overflow: hidden;
}
.search-ico{
    width: 11px;
    height: 11px;
}
.avatar{
    width: 20px;
    height: 18px;
    background: linear-gradient(#cfd4d0 0, #aab0aa 55%, #4a504a 62%, #7f857f 100%);
}
.user{
    margin-left: 3px;
    width: 53px;
    line-height: 18px;
    color: #111;
    white-space: nowrap;
}

/* ribbon */
.ribbon{
    height: 97px;
    flex: none;
    display: flex;
    border-bottom: 1px solid #888;
    background: linear-gradient(#fff 0, #fff 52%, #eceff1 100%);
}
.group{
    display: flex;
    flex-direction: column;
    flex: none;
    box-sizing: border-box;
    border-right: 1px solid #d7dadc;
    height: 94px;
}
.tools{
    display: flex;
    height: 73px;
    padding-top: 3px;
}
.col{
    display: flex;
    flex-direction: column;
}
.tool{
    display: flex;
    align-items: center;
    height: 23px;
    gap: 3px;
    white-space: nowrap;
}
.tool.off,.bigbtn.off{
    color: #aeaeae;
}
.group-name{
    height: 16px;
    margin-top: 1px;
    text-align: center;
    white-space: nowrap;
}
.g-select{
    width: 146px;
    margin-left: -23px;
}
.g-cad{
    width: 195px;
    padding-left: 11px;
}
.g-common{
    width: 274px;
    padding-left: 10px;
}
.g-modify{
    width: 238px;
    padding-left: 11px;
}
.g-draw{
    width: 119px;
}
.g-smart{
    width: 142px;
    padding-left: 8px;
}
.g-smart .tools .col{
    padding-left: 6px;
}
.g-smart .group-name{
    margin-top: 3px;
}
.big-cut{
    width: 54px;
    display: flex;
    flex-direction: column;
    align-items: center;
    padding-top: 4px;
}
.ico-select{
    width: 30px;
    height: 34px;
    margin-bottom: 1px;
}
.bigbtn{
    display: flex;
    flex-direction: column;
    align-items: center;
    flex: none;
    height: 67px;
    margin-top: 2px;
    white-space: nowrap;
}
.bigbtn.pressed{
    background-color: #c9d9ee;
}
.ico-point{
    width: 30px;
    height: 32px;
    margin: 1px 0 4px 4px;
}
.bigbtn.w-49 span{
    padding-left: 4px;
}
.ico-line{
    width: 28px;
    height: 34px;
    margin: 1px 0 2px;
}
.small{
    padding-left: 4px;
}
.ico-smart{
    width: 30px;
    height: 34px;
    margin: 3px 0 0;
}
.bigbtn .caret{
    margin: 8px 0 0;
}

/* option bar */
.optbar{
    height: 27px;
    flex: none;
    display: flex;
    align-items: flex-start;
    padding-top: 3px;
    box-sizing: border-box;
    background-color: #c8cbd0;
    border-bottom: 1px solid #a8abb0;
}
.combo{
    height: 20px;
    box-sizing: border-box;
    margin-left: 3px;
    padding-left: 4px;
    background-color: #fff;
    position: relative;
    line-height: 21px;
    flex: none;
}
.combo.first{
    margin-left: -10px;
    width: 89px;
    padding-left: 6px;
}
.combo::after{
    content: "";
    position: absolute;
    right: 7px;
    top: 8px;
    border-left: 3px solid transparent;
    border-right: 3px solid transparent;
    border-top: 4px solid #666;
}
.check{
    width: 13px;
    height: 13px;
    margin: 3px 3px 0 4px;
    background-color: #fff;
    border: 1px solid #888;
    border-radius: 2px;
    box-sizing: border-box;
    flex: none;
}
.lbl{
    line-height: 22px;
    white-space: nowrap;
    flex: none;
}
.lbl.dim{
    color: #999;
}
.lbl.rev{
    margin-left: 1px;
}
.x-lbl{
    margin-left: 2px;
}
.field{
    height: 20px;
    box-sizing: border-box;
    background-color: #fff;
    padding-left: 3px;
    line-height: 21px;
    flex: none;
    position: relative;
}
.dimtext{
    color: #aaa;
}
.spin::before,.spin::after{
    content: "";
    position: absolute;
    right: 5px;
    border-left: 3px solid transparent;
    border-right: 3px solid transparent;
}
.spin::before{
    top: 4px;
    border-bottom: 4px solid #444;
}
.spin::after{
    bottom: 3px;
    border-top: 4px solid #444;
}
.sep{
    width: 1px;
    height: 20px;
    margin: 0 3px;
    background-color: #a8abb0;
    flex: none;
}

/* panels */
.main{
    flex: 1;
    display: flex;
    min-height: 0;
}
.band{
    height: 10px;
    margin-top: 1px;
    background-color: #d2d4d8;
    position: relative;
    flex: none;
}
.band-x{
    position: absolute;
    right: 5px;
    top: -3px;
    color: #666;
}
.leftpanel{
    width: 188px;
    flex: none;
    display: flex;
    flex-direction: column;
    background-color: #fff;
}
.nav-title{
    height: 22px;
    line-height: 25px;
    color: #888;
    background-color: #eee;
    border-bottom: 1px solid #ccc;
    box-sizing: border-box;
    flex: none;
    overflow: hidden;
    text-indent: -2px;
}
.nav-tools{
    height: 29px;
    flex: none;
    display: flex;
    justify-content: flex-end;
    align-items: center;
    gap: 4px;
    padding-right: 1px;
    background-color: #f3f3f3;
    border-bottom: 1px solid #ccc;
    box-sizing: border-box;
}
.navbtn{
    width: 24px;
    height: 23px;
    display: flex;
    align-items: center;
    justify-content: center;
    box-sizing: border-box;
    border: 1px solid #8fc0f0;
    border-radius: 3px;
    background-color: #f3f8fe;
}
.nav-body{
    flex: 1;
    display: flex;
    min-height: 0;
}
.nav-list{
    flex: 1;
    padding-top: 3px;
    overflow: hidden;
}
.parent{
    height: 24px;
    line-height: 24px;
    padding-left: 7px;
}
.item{
    height: 24px;
    padding: 1px 0 0 29px;
    box-sizing: border-box;
}
.row{
    width: 140px;
    height: 21px;
    display: flex;
    align-items: center;
    gap: 6px;
    padding-left: 3px;
    box-sizing: border-box;
    white-space: nowrap;
}
.row.selected{
    background-color: #c9d9ee;
}
.nav-scroll{
    width: 11px;
    flex: none;
    border-right: 3px solid #fff;
    box-sizing: border-box;
}
.thumb{
    width: 8px;
    height: 460px;
    margin-top: 219px;
    background-color: #c8c8c8;
    border-radius: 4px 4px 0 0;
}
.midpanel{
    width: 413px;
    margin-left: 6px;
    flex: none;
    display: flex;
    flex-direction: column;
    background-color: #fff;
}
.comp-part{
    height: 402px;
    flex: none;
    display: flex;
    flex-direction: column;
    border-bottom: 1px solid #bbb;
    box-sizing: border-box;
}
.tabs{
    height: 23px;
    flex: none;
    display: flex;
    background-color: #eee;
    border-bottom: 1px solid #ccc;
    box-sizing: border-box;
}
.ptab{
    width: 64px;
    text-align: center;
    line-height: 25px;
    background-color: #e0e0e0;
    color: #888;
    border-right: 1px solid #ccc;
}
.ptab.active{
    background-color: #eee;
    color: #222;
    font-weight: 500;
}
.comp-tools{
    height: 28px;
    flex: none;
    display: flex;
    align-items: center;
    padding-left: 6px;
    background-color: #f1f1f1;
    border-bottom: 1px solid #ccc;
    box-sizing: border-box;
    position: relative;
}
.ctool{
    display: flex;
    align-items: center;
    gap: 3px;
    margin-right: 9px;
    white-space: nowrap;
}
.ctool:nth-child(1){
    margin-right: 8px;
}
.more{
    position: absolute;
    right: 7px;
    top: -3px;
    color: #333;
}
.comp-search{
    height: 19px;
    line-height: 18px;
    padding-left: 2px;
    color: #999;
    border-bottom: 1px solid #ccc;
    box-sizing: border-box;
    flex: none;
}
.tree{
    flex: 1;
    padding-top: 4px;
}
.node{
    height: 24px;
    display: flex;
    align-items: center;
    white-space: nowrap;
}
.lv0{
    padding-left: 15px;
}
.lv1{
    padding-left: 40px;
}
.lv2{
    padding-left: 75px;
}
.tri{
    width: 0;
    height: 0;
    margin-right: 8px;
    border-left: 6px solid transparent;
    border-bottom: 6px solid #444;
}
.lv2 span{
    height: 21px;
    line-height: 21px;
    display: block;
    width: 79px;
    text-align: center;
}
.on{
    background-color: #b3cdee;
}
.prop-part{
    flex: 1;
    margin-top: 4px;
    min-height: 0;
    display: flex;
    flex-direction: column;
}
.prop-body{
    flex: 1;
    display: flex;
    min-height: 0;
    overflow: hidden;
}
.prop{
    width: 396px;
    table-layout: fixed;
    border-collapse: collapse;
    flex: none;
    font-size: 12px;
    line-height: 16px;
    color: #333;
}
.prop th,.prop td{
    height: 21px;
    padding: 0;
    box-sizing: border-box;
    border: 1px solid #ddd;
    font-weight: 400;
    white-space: nowrap;
    overflow: hidden;
}
.c-idx{
    width: 21px;
    text-align: center;
    background-color: #f4f4f4;
    color: #444;
}
.prop .c-name{
    width: 101px;
    padding-left: 3px;
    color: #2a7ae2;
}
.prop .head .c-name{
    color: #333;
    text-align: center;
    background-color: #f4f4f4;
}
.prop .c-val{
    width: 233px;
    padding-left: 3px;
    color: #333;
}
.prop .head .c-val{
    background-color: #7ab6f3;
    color: #fff;
    text-align: center;
}
.prop .head .c-add{
    color: #666;
    background-color: #f4f4f4;
}
.prop .c-add{
    width: 41px;
    padding-left: 14px;
}
.cur .c-idx{
    background-color: #7ab6f3;
    color: #fff;
    font-weight: 700;
}
.prop .cur .c-val{
    padding-left: 0;
}
.edit{
    height: 20px;
    border: 2px solid #7ab6f3;
    box-sizing: border-box;
    padding: 0 2px 0 4px;
    line-height: 16px;
    display: flex;
    justify-content: space-between;
    align-items: center;
}
.dots{
    width: 15px;
    height: 13px;
    line-height: 10px;
    text-align: center;
    border: 1px solid #7ab6f3;
    border-radius: 2px;
    color: #2f80e2;
    font-weight: 700;
}
.prop .ro .c-val{
    background-color: #e8e8e8;
    color: #999;
}
.box{
    display: block;
    width: 13px;
    height: 14px;
    border: 1px solid #999;
    border-radius: 2px;
    box-sizing: border-box;
}
.prop-scroll{
    width: 8px;
    height: 285px;
    margin-left: 5px;
    background-color: #c8c8c8;
    border-radius: 4px;
    flex: none;
}
.canvas{
    flex: 1;
    margin-left: 4px;
    background-color: #000;
    overflow: hidden;
}
.cad{
    display: block;
    width: 1172px;
    height: 749px;
}
.cad-v path{
    fill: none;
    stroke: #c00000;
    stroke-width: 1;
}
.cad-g path{
    fill: none;
    stroke: #006400;
}
.pink{
    fill: none;
    stroke: #e86a6a;
    stroke-width: 7;
}
.pink-in{
    fill: none;
    stroke: #b02020;
    stroke-width: 1;
}
.cad-h path{
    fill: none;
    stroke: #d00000;
}
.cad-h .dark{
    stroke: #560000;
}
.cad-h .mid{
    stroke: #a80000;
}
.cad-h .top{
    stroke: #8b0000;
    stroke-width: 2;
}
.cad-h .low{
    stroke: #e00000;
    stroke-width: 1.5;
}
.bubble{
    fill: none;
    stroke: #0a8a0a;
}
.cad-text{
    fill: #fff;
    font-family: "DejaVu Sans", sans-serif;
    font-size: 15px;
}
.cad-y{
    fill: #2fe02f;
    font-family: "DejaVu Sans", sans-serif;
    font-size: 16px;
}

/* dialog */
.dialog{
    position: absolute;
    left: 567px;
    top: 196px;
    width: 963px;
    height: 582px;
    background-color: #eee;
    box-shadow: 0 0 0 1px #c4c4c4;
    display: flex;
    flex-direction: column;
}
.dlg-title{
    height: 27px;
    flex: none;
    display: flex;
    align-items: center;
    padding-left: 9px;
    background-color: #2f80e2;
    color: #fff;
    position: relative;
}
.dlg-max{
    position: absolute;
    left: 918px;
    top: 9px;
    width: 8px;
    height: 8px;
    box-sizing: border-box;
    border: 1px solid #fff;
    border-top-width: 2px;
}
.dlg-close{
    position: absolute;
    left: 945px;
    top: 9px;
    width: 9px;
    height: 9px;
}
.dlg-labels{
    height: 46px;
    flex: none;
    display: flex;
    align-items: flex-end;
    padding: 0 0 11px 14px;
    box-sizing: border-box;
    color: #222;
}
.lab-left{
    width: 472px;
}
.lab-unit{
    width: 43px;
}
.dlg-body{
    height: 462px;
    flex: none;
    display: flex;
    padding-left: 14px;
}
.shape-box{
    width: 472px;
    height: 462px;
    display: flex;
    overflow: hidden;
    box-sizing: border-box;
    background-color: #fff;
    border: 1px solid #ccc;
    border-right: none;
    flex: none;
}
.shape-grid{
    width: 459px;
    display: grid;
    grid-template-columns: repeat(3, 153px);
    grid-auto-rows: 153px;
    flex: none;
}
.cell{
    padding: 6px 0 0 6px;
    box-sizing: border-box;
    border-right: 1px solid #ddd;
    border-bottom: 1px solid #ddd;
}
.cell.sel{
    outline: 2px solid #2f80e2;
    outline-offset: -3px;
}
.thumb-svg{
    display: block;
    width: 140px;
    height: 140px;
    background-color: #7092a9;
}
.t-title{
    font-family: "Liberation Serif", "Noto Sans CJK SC", serif;
    font-size: 19px;
    fill: #2b2a78;
    font-weight: 300;
}
.t-dim{
    font-family: "Liberation Serif", "Noto Sans CJK SC", serif;
    font-size: 15px;
    fill: #eef2f5;
}
.t-dim.big{
    font-size: 18px;
}
.yel{
    fill: none;
    stroke: #dede4a;
}
.blk{
    fill: none;
    stroke: #222b30;
}
.arw{
    fill: #20292f;
}
.shape-scroll{
    flex: 1;
    padding: 13px 0 0 4px;
}
.shape-thumb{
    width: 7px;
    height: 217px;
    background-color: #ccc;
    border-radius: 4px;
}
.preview{
    display: block;
    width: 463px;
    height: 462px;
    background-color: #000;
    flex: none;
}
.pv-line path{
    fill: none;
    stroke: #fff;
    stroke-width: 1;
}
.pv-num{
    font-family: "Liberation Serif", serif;
    font-size: 40px;
    fill: #00f000;
}
.pv-sym{
    font-family: "Liberation Serif", serif;
    font-size: 40px;
    fill: #fff;
}
.pv-note{
    font-family: "Liberation Serif", "Noto Sans CJK SC", serif;
    font-size: 29px;
    fill: #00f0f0;
}
.dlg-foot{
    flex: 1;
    display: flex;
    justify-content: flex-end;
    gap: 8px;
    padding: 7px 15px 0 0;
}
.btn{
    width: 78px;
    height: 24px;
    line-height: 24px;
    text-align: center;
    background-color: #fff;
    border: 1px solid #ccc;
    border-radius: 3px;
    color: #222;
}
.btn.ok{
    background-color: #2f80e2;
    border-color: #2f80e2;
    color: #fff;
}
.grip{
    position: absolute;
    right: 2px;
    bottom: 3px;
    width: 8px;
    height: 8px;
}

/* hand drawn marks lying over the window */
.ink{
    position: absolute;
    left: 0;
    top: 0;
    width: 1783px;
    height: 895px;
    pointer-events: none;
}
.ink path{
    fill: none;
    stroke: #ff3a3d;
    stroke-width: 7;
    stroke-linecap: round;
    stroke-linejoin: round;
}
.ink .fat{
    stroke-width: 8;
}
```
